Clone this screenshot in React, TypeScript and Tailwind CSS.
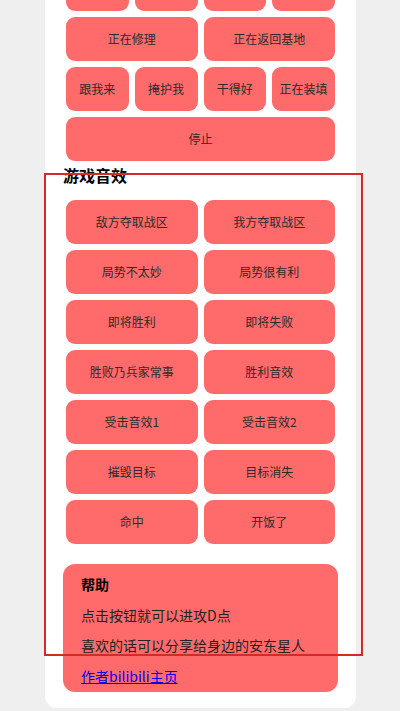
import React from 'react';

const voicePairs = ['正在修理', '正在返回基地'];
const voiceQuad = ['跟我来', '掩护我', '干得好', '正在装填'];

const sounds = [
  '敌方夺取战区',
  '我方夺取战区',
  '局势不太妙',
  '局势很有利',
  '即将胜利',
  '即将失败',
  '胜败乃兵家常事',
  '胜利音效',
  '受击音效1',
  '受击音效2',
  '摧毁目标',
  '目标消失',
  '命中',
  '开饭了',
];

function SoundButton({ label, wide }: { label?: string; wide?: boolean }) {
  return (
    <button
      type="button"
      className={`m-[3px] flex h-[44px] items-center justify-center rounded-[9px] bg-[#ff6b6b] text-[12px] text-[#2b2b2b] ${
        wide ? 'col-span-4' : ''
      }`}
    >
      {label}
    </button>
  );
}

export default function App() {
  return (
    <div className="relative h-[711px] overflow-hidden bg-[#efefef] font-['Noto_Sans_CJK_SC','Noto_Sans',sans-serif]">
      <div className="-mt-[36px] ml-[45px] w-[311px] rounded-b-[12px] bg-white px-[18px] pb-[16px]">
        {/* row scrolled above the top edge */}
        <div className="grid grid-cols-4">
          <SoundButton />
          <SoundButton />
          <SoundButton />
          <SoundButton />
        </div>
        <div className="grid grid-cols-2">
          {voicePairs.map((v) => (
            <SoundButton key={v} label={v} />
          ))}
        </div>
        <div className="grid grid-cols-4">
          {voiceQuad.map((v) => (
            <SoundButton key={v} label={v} />
          ))}
          <SoundButton label="停止" wide />
        </div>

        <h2 className="mb-[11px] h-[22px] text-[16px] font-bold leading-[22px] text-black">游戏音效</h2>

        <div className="grid grid-cols-2">
          {sounds.map((s) => (
            <SoundButton key={s} label={s} />
          ))}
        </div>

        <div className="mt-[17px] h-[128px] rounded-[12px] bg-[#ff6b6b] px-[18px] pt-[10px] text-[14px] leading-[20px] text-[#222]">
          <h3 className="font-bold text-black">帮助</h3>
          <p className="mt-[11px]">点击按钮就可以进攻D点</p>
          <p className="mt-[10px]">喜欢的话可以分享给身边的安东星人</p>
          <p className="mt-[11px]">
            <a href="#" className="text-[#0000ee] underline">
              作者bilibili主页
            </a>
          </p>
        </div>
      </div>

      <div className="pointer-events-none absolute left-[44px] top-[173px] h-[483px] w-[319px] border-2 border-[#d42a2a]" />
    </div>
  );
}
